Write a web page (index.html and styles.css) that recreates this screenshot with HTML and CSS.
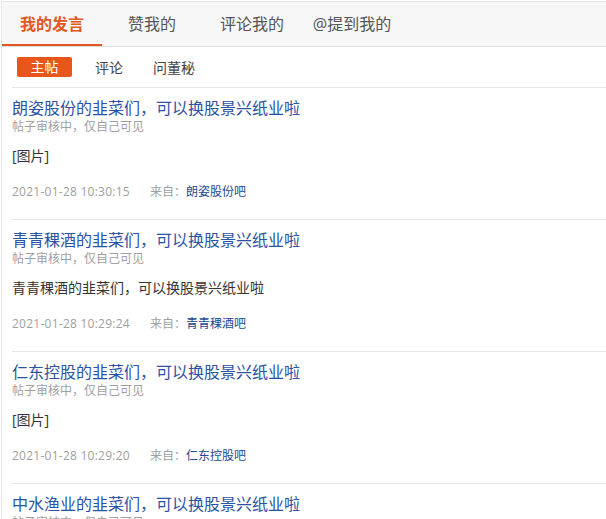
FILE: index.html
```html
<!DOCTYPE html>
<html lang="zh-CN">
<head>
	<meta charset="utf-8" />
	<title>我的发言</title>
	<link rel="stylesheet" href="styles.css">
</head>
<body>
	<div id="box">
		<div class="tabs">
			<a class="tab active">我的发言</a>
			<a class="tab">赞我的</a>
			<a class="tab">评论我的</a>
			<a class="tab">@提到我的</a>
		</div>
		<div class="subtabs">
			<a class="btn">主帖</a>
			<a class="subtab first">评论</a>
			<a class="subtab">问董秘</a>
		</div>

		<div class="post">
			<a class="title">朗姿股份的韭菜们，可以换股景兴纸业啦</a>
			<p class="status">帖子审核中，仅自己可见</p>
			<p class="text">[图片]</p>
			<p class="meta"><span class="time">2021-01-28 10:30:15</span>来自：<a class="bar">朗姿股份吧</a></p>
		</div>
		<div class="post">
			<a class="title">青青稞酒的韭菜们，可以换股景兴纸业啦</a>
			<p class="status">帖子审核中，仅自己可见</p>
			<p class="text">青青稞酒的韭菜们，可以换股景兴纸业啦</p>
			<p class="meta"><span class="time">2021-01-28 10:29:24</span>来自：<a class="bar">青青稞酒吧</a></p>
		</div>
		<div class="post">
			<a class="title">仁东控股的韭菜们，可以换股景兴纸业啦</a>
			<p class="status">帖子审核中，仅自己可见</p>
			<p class="text">[图片]</p>
			<p class="meta"><span class="time">2021-01-28 10:29:20</span>来自：<a class="bar">仁东控股吧</a></p>
		</div>
		<div class="post">
			<a class="title">中水渔业的韭菜们，可以换股景兴纸业啦</a>
			<p class="status">帖子审核中，仅自己可见</p>
			<p class="text">[图片]</p>
			<p class="meta"><span class="time">2021-01-28 10:29:16</span>来自：<a class="bar">中水渔业吧</a></p>
		</div>
	</div>
</body>
</html>
```

FILE: styles.css
```css
body{
	margin: 0;
	background: #fff;
	font-family: "Open Sans", "Noto Sans CJK SC", sans-serif;
	overflow: hidden;
}

p{
	margin: 0;
}

#box{
	margin: 1px 0 0 1px;
	border-top: 1px solid #e6e6e6;
	border-left: 1px solid #e6e6e6;
}

/* top tabs */
.tabs{
	display: flex;
	height: 44px;
	background: #f7f7f7;
	border-bottom: 1px solid #dedede;
}

.tab{
	width: 100px;
	text-align: center;
	line-height: 44px;
	font-size: 16px;
	color: #555;
}

.tab.active{
	color: #e4571e;
	font-weight: bold;
	box-shadow: inset 0 -2px 0 #e0571f;
}

/* sub tabs */
.subtabs{
	display: flex;
	align-items: center;
	height: 40px;
	padding-left: 15px;
	font-size: 14px;
	color: #444;
}

.btn{
	width: 55px;
	height: 20px;
	line-height: 20px;
	text-align: center;
	background: #e8561c;
	color: #fff;
	border-radius: 2px;
	margin-right: 23px;
}

.subtab.first{
	margin-right: 30px;
}

/* posts */
.post{
	margin-left: 10px;
	border-top: 1px solid #e4e4e4;
	padding: 9px 0 19px 0;
}

.title{
	display: block;
	font-size: 16px;
	line-height: 22px;
	color: #2b52a3;
}

.status{
	font-size: 12px;
	line-height: 16px;
	color: #a0a0a0;
}

.text{
	margin-top: 11px;
	font-size: 14px;
	line-height: 20px;
	color: #333;
}

.meta{
	margin-top: 18px;
	font-size: 12px;
	line-height: 16px;
	color: #a0a0a0;
}

.time{
	letter-spacing: 0.25px;
	margin-right: 20px;
}

.bar{
	color: #25488e;
}
```
